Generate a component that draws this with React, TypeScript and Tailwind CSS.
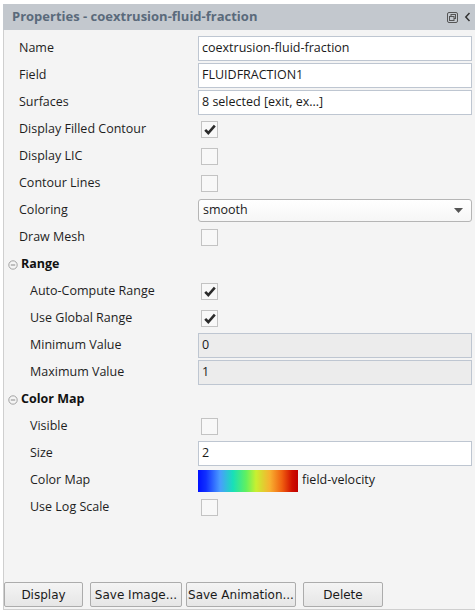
import React from 'react';

const font = { fontFamily: '"Open Sans", "Noto Sans", sans-serif' };

function Check({ checked }: { checked?: boolean }) {
  return (
    <div className="w-[17px] h-[17px] ml-[3px] border border-[#c3c3c3] bg-[#f8f8f8] flex items-center justify-center">
      {checked && (
        <svg width="12" height="11" viewBox="0 0 12 11">
          <path d="M1.2 5.8 L4.3 9 L10.8 1.6" fill="none" stroke="#2b2b2b" strokeWidth="2.6" strokeLinejoin="miter" />
        </svg>
      )}
    </div>
  );
}

function TextBox({ value, disabled }: { value: string; disabled?: boolean }) {
  return (
    <div
      className={`h-[25px] border border-[#bec6d1] flex items-center pl-[3px] text-[12.5px] text-[#1a1a1a] ${
        disabled ? 'bg-[#ececec]' : 'bg-white'
      }`}
    >
      {value}
    </div>
  );
}

function Row({ label, indent, children }: { label: string; indent?: boolean; children: React.ReactNode }) {
  return (
    <div className="h-[27px] flex items-center">
      <div className={`w-[194px] shrink-0 text-[12.5px] text-[#1e1e1e] ${indent ? 'pl-[26px]' : 'pl-[15px]'}`}>{label}</div>
      <div className="flex-1">{children}</div>
    </div>
  );
}

function Section({ title }: { title: string }) {
  return (
    <div className="h-[27px] flex items-center pl-[4px]">
      <svg width="10" height="10" viewBox="0 0 10 10" className="mr-[3px]">
        <circle cx="5" cy="5" r="4.2" fill="none" stroke="#9a9a9a" strokeWidth="0.9" />
        <path d="M2.8 5 H7.2" stroke="#8a8a8a" strokeWidth="1" />
      </svg>
      <span className="text-[12.5px] font-bold text-[#111]">{title}</span>
    </div>
  );
}

function Btn({ label, w }: { label: string; w: string }) {
  return (
    <button
      className={`${w} h-[25px] shrink-0 border border-[#acacac] rounded-[2px] bg-gradient-to-b from-[#f4f4f4] to-[#e6e6e6] text-[12px] text-[#1a1a1a] flex items-center justify-center`}
      style={{ fontFamily: 'Tahoma, "DejaVu Sans", sans-serif' }}
    >
      {label}
    </button>
  );
}

export default function App() {
  return (
    <div className="w-[475px] h-[610px] bg-white pt-[4px]" style={font}>
      <div className="h-[26px] bg-[#c3c8ce] flex items-center pl-[9px] pr-[4px] ml-[3px]">
        <span className="text-[13px] font-bold text-[#5a6a7b] flex-1">Properties - coextrusion-fluid-fraction</span>
        <svg width="11" height="11" viewBox="0 0 11 11" className="mr-[6px]">
          <rect x="0.5" y="0.5" width="10" height="10" rx="1.5" fill="none" stroke="#555" strokeWidth="1" />
          <rect x="4" y="2.5" width="4.5" height="4" fill="none" stroke="#555" strokeWidth="1" />
          <rect x="2.5" y="4.5" width="4.5" height="4" fill="#c3c8ce" stroke="#555" strokeWidth="1" />
        </svg>
        <svg width="7" height="10" viewBox="0 0 7 10">
          <path d="M5.5 1 L1.8 5 L5.5 9" fill="none" stroke="#333" strokeWidth="1.5" />
        </svg>
      </div>
      <div className="h-[580px] ml-[3px] border-l border-b border-[#cfcfcf] bg-[#f4f4f4] flex flex-col pr-[3px]">
        <div className="pt-[5px]">
          <Row label="Name">
            <TextBox value="coextrusion-fluid-fraction" />
          </Row>
          <Row label="Field">
            <TextBox value="FLUIDFRACTION1" />
          </Row>
          <Row label="Surfaces">
            <TextBox value="8 selected [exit, ex...]" />
          </Row>
          <Row label="Display Filled Contour">
            <Check checked />
          </Row>
          <Row label="Display LIC">
            <Check />
          </Row>
          <Row label="Contour Lines">
            <Check />
          </Row>
          <Row label="Coloring">
            <div className="h-[23px] border border-[#b5b5b5] rounded-[3px] bg-gradient-to-b from-white to-[#f6f6f6] flex items-center pl-[4px] pr-[8px] text-[12.5px] text-[#1a1a1a]">
              <span className="flex-1">smooth</span>
              <svg width="9" height="5" viewBox="0 0 9 5">
                <path d="M0 0 H9 L4.5 5 Z" fill="#555" />
              </svg>
            </div>
          </Row>
          <Row label="Draw Mesh">
            <Check />
          </Row>
          <Section title="Range" />
          <Row label="Auto-Compute Range" indent>
            <Check checked />
          </Row>
          <Row label="Use Global Range" indent>
            <Check checked />
          </Row>
          <Row label="Minimum Value" indent>
            <TextBox value="0" disabled />
          </Row>
          <Row label="Maximum Value" indent>
            <TextBox value="1" disabled />
          </Row>
          <Section title="Color Map" />
          <Row label="Visible" indent>
            <Check />
          </Row>
          <Row label="Size" indent>
            <TextBox value="2" />
          </Row>
          <Row label="Color Map" indent>
            <div className="flex items-center">
              <div
                className="w-[100px] h-[22px]"
                style={{
                  background:
                    'linear-gradient(to right, #0010ff 0%, #1030ff 8%, #4a9cff 22%, #18e0b8 35%, #60f060 48%, #c8f030 58%, #f8b030 72%, #f06010 84%, #d01000 94%, #c00000 100%)',
                }}
              />
              <span className="ml-[4px] text-[12.5px] text-[#1a1a1a]">field-velocity</span>
            </div>
          </Row>
          <Row label="Use Log Scale" indent>
            <Check />
          </Row>
        </div>
        <div className="flex-1" />
        <div className="flex items-center mb-[2px]">
          <Btn label="Display" w="w-[79px]" />
          <Btn label="Save Image..." w="w-[92px] ml-[7px]" />
          <Btn label="Save Animation..." w="w-[110px] ml-[4px]" />
          <Btn label="Delete" w="w-[80px] ml-[7px]" />
        </div>
      </div>
    </div>
  );
}
